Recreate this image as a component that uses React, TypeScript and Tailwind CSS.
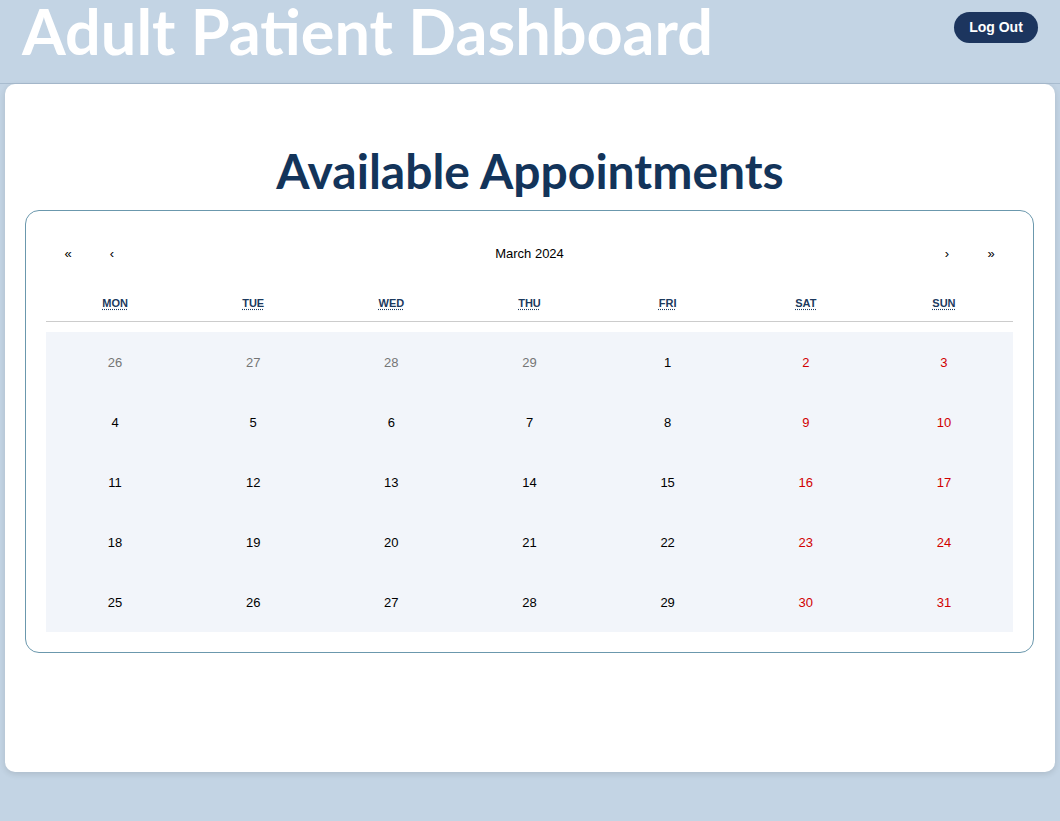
const weekdays = ['MON', 'TUE', 'WED', 'THU', 'FRI', 'SAT', 'SUN'];

type Day = { n: number; other?: boolean };

function buildWeeks(): Day[][] {
  const days: Day[] = [26, 27, 28, 29].map((n) => ({ n, other: true }));
  for (let i = 1; i <= 31; i++) days.push({ n: i });
  const weeks: Day[][] = [];
  for (let i = 0; i < days.length; i += 7) weeks.push(days.slice(i, i + 7));
  return weeks;
}

function Calendar() {
  const weeks = buildWeeks();
  return (
    <div className="ml-[20px] mr-[21px] rounded-[14px] border border-[#6b98ad] p-[20px] font-['Liberation_Sans',Arial,sans-serif]">
      {/* Navigation */}
      <div className="mb-[17px] flex h-[44px] items-center pt-[2px] text-[13px] text-black">
        <button className="h-[44px] w-[44px]">«</button>
        <button className="h-[44px] w-[44px]">‹</button>
        <span className="flex-1 text-center">March 2024</span>
        <button className="h-[44px] w-[44px]">›</button>
        <button className="h-[44px] w-[44px]">»</button>
      </div>

      {/* Weekdays */}
      <div className="grid h-[30px] grid-cols-7 items-start border-b border-[#cccccc] pt-[3px]">
        {weekdays.map((d) => (
          <div key={d} className="text-center text-[11px] font-bold text-[#1c3a5e]">
            <abbr title={d} className="underline decoration-dotted underline-offset-[2px]">
              {d}
            </abbr>
          </div>
        ))}
      </div>

      {/* Days */}
      <div className="mt-[10px] bg-[#f2f5fa]">
        {weeks.map((week, wi) => (
          <div key={wi} className="grid h-[60px] grid-cols-7 items-center">
            {week.map((day, di) => {
              const weekend = di >= 5;
              const color = day.other
                ? 'text-[#757575]'
                : weekend
                ? 'text-[#d10000]'
                : 'text-black';
              return (
                <div key={di} className={`pt-[1px] text-center text-[13px] ${color}`}>
                  {day.n}
                </div>
              );
            })}
          </div>
        ))}
      </div>
    </div>
  );
}

export default function App() {
  return (
    <div className="min-h-[821px] bg-[#c3d4e4] font-['Lato','Noto_Sans',sans-serif]">
      {/* Header */}
      <header className="flex h-[84px] items-start justify-between border-b border-[#a8bccf] px-[22px]">
        <h1 className="text-[63px] font-bold leading-[62px] text-white">Adult Patient Dashboard</h1>
        <button className="mt-[12px] h-[31px] w-[84px] rounded-full bg-[#1c355e] font-['Liberation_Sans',Arial,sans-serif] text-[14px] font-bold text-white">
          Log Out
        </button>
      </header>

      {/* Main card */}
      <main className="mx-[5px] h-[688px] rounded-[10px] bg-white pt-[57px] shadow-[0_2px_6px_rgba(0,0,0,0.12)]">
        <h2 className="mb-[9px] h-[60px] text-center text-[48px] font-bold leading-[60px] text-[#13345a]">
          Available Appointments
        </h2>
        <Calendar />
      </main>
    </div>
  );
}
